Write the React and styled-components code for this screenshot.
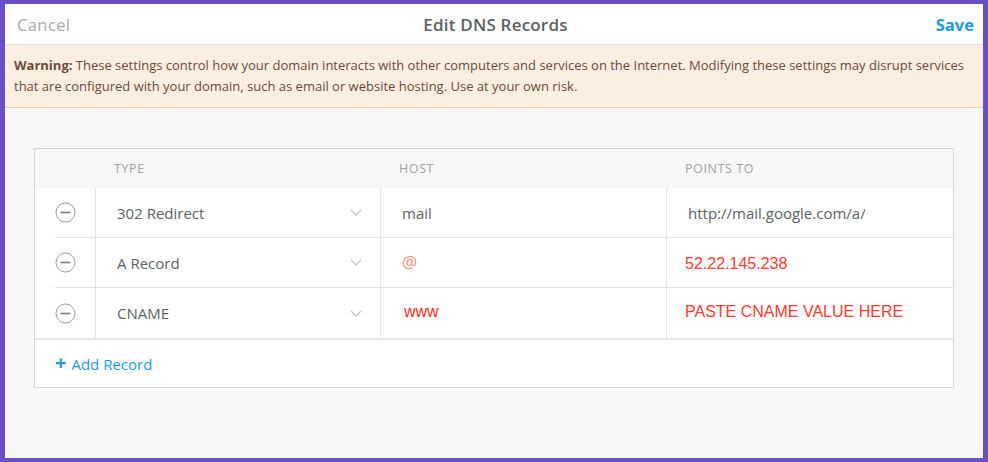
import React from "react";
import styled, { createGlobalStyle } from "styled-components";

const GlobalStyle = createGlobalStyle`
  html, body { margin: 0; padding: 0; }
  body { font-family: "Open Sans", "Noto Sans", sans-serif; }
`;

const Frame = styled.div`
  width: 988px;
  height: 462px;
  box-sizing: border-box;
  border: 5px solid #6a4fc6;
  border-top-width: 4px;
  border-bottom-width: 4px;
  background: #f7f7f7;
  display: flex;
  flex-direction: column;
  overflow: hidden;
`;

const TopBar = styled.div`
  height: 40px;
  background: #fff;
  border-bottom: 1px solid #e2dfea;
  display: flex;
  align-items: center;
  justify-content: space-between;
  padding: 0 9px 0 12px;
  font-size: 16.5px;
`;

const BarButton = styled.span`
  color: ${(p) => (p.primary ? "#1b9be6" : "#a9a9a9")};
  font-weight: ${(p) => (p.primary ? 700 : 400)};
  width: 80px;
  text-align: ${(p) => (p.primary ? "right" : "left")};
  letter-spacing: ${(p) => (p.primary ? 0 : 0.4)}px;
`;

const Title = styled.span`
  color: #5b6166;
  font-weight: 600;
  font-size: 17px;
  letter-spacing: 0.2px;
`;

const Warning = styled.div`
  background: #fdeee2;
  border-bottom: 1px solid #f6c8a3;
  color: #6b4b36;
  font-size: 13px;
  line-height: 21px;
  padding: 10px 9px 10px 9px;
  b { font-weight: 700; }
`;

const Body = styled.div`
  flex: 1;
  padding: 40px 29px 0 29px;
`;

const Card = styled.div`
  border: 1px solid #d6d6d6;
  background: #fff;
`;

const Grid = styled.div`
  display: grid;
  grid-template-columns: 60px 285px 286px 1fr;
`;

const HeadRow = styled(Grid)`
  height: 39px;
  background: #f7f7f7;
  align-items: center;
`;

const HeadLabel = styled.div`
  font-size: 12.5px;
  letter-spacing: 0.6px;
  color: #a3a3a3;
  padding-left: ${(p) => p.pad || 19}px;
`;

const Rows = styled.div`
  border-bottom: 2px solid #e6e6e6;
`;

const IconCell = styled.div`
  height: 50px;
  padding-left: 20px;
  display: flex;
`;

const IconInner = styled.div`
  flex: 1;
  display: flex;
  align-items: center;
  border-bottom: ${(p) => (p.last ? "none" : "1px solid #e4e4e4")};
`;

const Cell = styled.div`
  height: 50px;
  box-sizing: border-box;
  border-left: 1px solid #e4e4e4;
  border-bottom: ${(p) => (p.last ? "none" : "1px solid #e4e4e4")};
  display: flex;
  align-items: center;
  justify-content: space-between;
  padding: 0 18px 0 ${(p) => p.pad || 21}px;
  font-size: 15px;
  color: #5d6266;
  overflow: hidden;
  white-space: nowrap;
`;

const Value = styled.span`
  color: ${(p) => p.color || "#5d6266"};
  font-family: ${(p) => (p.plain ? '"Liberation Sans", Arial, sans-serif' : "inherit")};
  font-size: ${(p) => p.size || 15}px;
  max-width: ${(p) => p.max || "none"};
  overflow: hidden;
  position: relative;
  top: ${(p) => p.nudge || 0}px;
`;

const AddRow = styled.div`
  height: 47px;
  display: flex;
  align-items: center;
  padding-left: 20px;
  color: #1b9be6;
  font-size: 15px;
  gap: 5px;
`;

const Plus = styled.span`
  font-weight: 700;
  font-size: 20px;
  line-height: 1;
  position: relative;
  top: -1px;
`;

function MinusIcon() {
  return (
    <svg width="21" height="21" viewBox="0 0 21 21">
      <circle cx="10.5" cy="10.5" r="9.5" fill="none" stroke="#9c9c9c" strokeWidth="1" />
      <line x1="5.5" y1="10.5" x2="15.5" y2="10.5" stroke="#7b7b7b" strokeWidth="1.6" />
    </svg>
  );
}

function Chevron() {
  return (
    <svg width="12" height="7" viewBox="0 0 12 7">
      <polyline points="1,1 6,6 11,1" fill="none" stroke="#c4c4c4" strokeWidth="1.3" />
    </svg>
  );
}

const records = [
  {
    type: "302 Redirect",
    host: <Value>mail</Value>,
    points: <Value max="177px">http://mail.google.com/a/</Value>,
  },
  {
    type: "A Record",
    host: (
      <Value color="#ff8b7c" size={17} nudge={-1}>
        @
      </Value>
    ),
    points: (
      <Value color="#ff3b30" plain size={16} nudge={1}>
        52.22.145.238
      </Value>
    ),
    pointsPad: 18,
  },
  {
    type: "CNAME",
    host: (
      <Value color="#ff2e20" plain size={16} nudge={-1}>
        www
      </Value>
    ),
    hostPad: 23,
    points: (
      <Value color="#ff3b30" plain size={16} nudge={-1}>
        PASTE CNAME VALUE HERE
      </Value>
    ),
    pointsPad: 18,
  },
];

export default function App() {
  return (
    <>
      <GlobalStyle />
      <Frame>
        <TopBar>
          <BarButton>Cancel</BarButton>
          <Title>Edit DNS Records</Title>
          <BarButton primary>Save</BarButton>
        </TopBar>
        <Warning>
          <b>Warning:</b> These settings control how your domain interacts with other computers and
          services on the Internet. Modifying these settings may disrupt services that are configured
          with your domain, such as email or website hosting. Use at your own risk.
        </Warning>
        <Body>
          <Card>
            <HeadRow>
              <div />
              <HeadLabel>TYPE</HeadLabel>
              <HeadLabel>HOST</HeadLabel>
              <HeadLabel>POINTS TO</HeadLabel>
            </HeadRow>
            <Rows>
              {records.map((r, i) => {
                const last = i === records.length - 1;
                return (
                  <Grid key={i}>
                    <IconCell>
                      <IconInner last={last}>
                        <MinusIcon />
                      </IconInner>
                    </IconCell>
                    <Cell last={last}>
                      <Value>{r.type}</Value>
                      <Chevron />
                    </Cell>
                    <Cell last={last} pad={r.hostPad}>
                      {r.host}
                    </Cell>
                    <Cell last={last} pad={r.pointsPad}>
                      {r.points}
                    </Cell>
                  </Grid>
                );
              })}
            </Rows>
            <AddRow>
              <Plus>+</Plus>
              <span>Add Record</span>
            </AddRow>
          </Card>
        </Body>
      </Frame>
    </>
  );
}
